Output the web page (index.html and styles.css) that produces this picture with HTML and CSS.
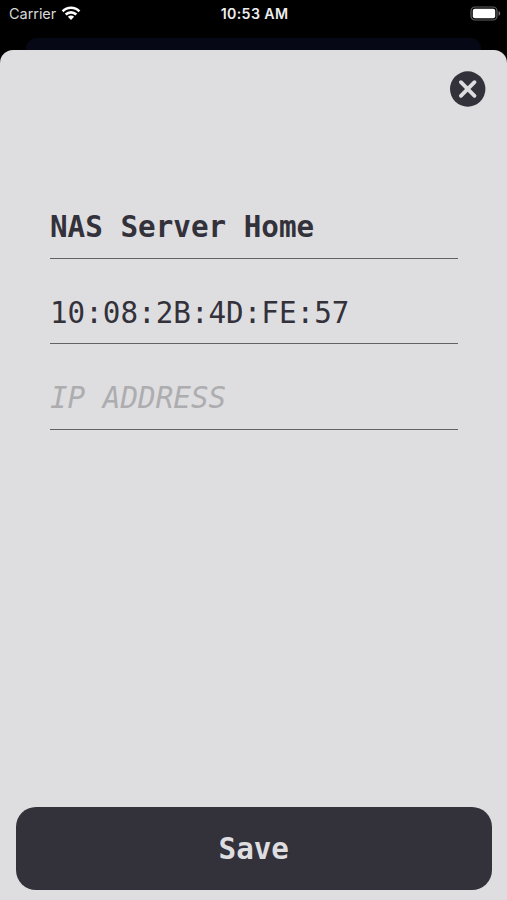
FILE: index.html
```html
<!DOCTYPE html>
<html lang="en">
<head>
<meta charset="utf-8">
<title>Edit device</title>
<meta name="viewport" content="width=device-width, initial-scale=1">
<link rel="stylesheet" href="styles.css">
</head>
<body>
<div class="screen">
  <header class="status">
    <div class="status-left">
      <span class="carrier">Carrier</span>
      <svg class="wifi" width="20" height="14" viewBox="0 0 20 14" fill="none" stroke="#fff" stroke-width="2.6">
        <path d="M1.6 5.3C6.2.5 13.8.5 18.4 5.3"/>
        <path d="M4.7 8.5c3-2.9 7.6-2.9 10.6 0"/>
        <path d="M10 14 6.9 10.8c1.8-1.6 4.4-1.6 6.2 0z" fill="#fff" stroke="none"/>
      </svg>
    </div>
    <span class="time">10:53 AM</span>
    <svg class="battery" width="31" height="15" viewBox="0 0 31 15">
      <rect x="1" y="1" width="26" height="13" rx="4" fill="none" stroke="#626262" stroke-width="1.2"/>
      <rect x="2.8" y="2.8" width="22.4" height="9.4" rx="2" fill="#fff"/>
      <path d="M28.6 5.1c2.2 1 2.2 3.8 0 4.8z" fill="#777"/>
    </svg>
  </header>
  <div class="backdrop-card"></div>
  <main class="sheet">
    <button class="close" type="button" aria-label="Close">
      <svg width="36" height="36" viewBox="0 0 36 36">
        <circle cx="17.7" cy="18" r="17.7" fill="#33313a"/>
        <path d="M10.9 11.2 24.5 24.8M24.5 11.2 10.9 24.8" stroke="#dedee1" stroke-width="3.8" stroke-linecap="round"/>
      </svg>
    </button>
    <form class="form">
      <div class="field name">NAS Server Home</div>
      <div class="field">10:08:2B:4D:FE:57</div>
      <div class="field placeholder">IP ADDRESS</div>
    </form>
    <button class="save" type="button">Save</button>
  </main>
</div>
</body>
</html>
```
FILE: styles.css
```css
* { box-sizing: border-box; }
body { margin: 0; background: #000; }
.screen {
  height: 900px;
  display: flex;
  flex-direction: column;
  overflow: hidden;
}
.status {
  height: 38px;
  flex: none;
  display: grid;
  grid-template-columns: 1fr auto 1fr;
  align-items: start;
  padding: 5px 6px 0 9px;
  color: #fff;
  font: 14.5px/18px Inter, sans-serif;
}
.status-left { display: flex; gap: 5px; }
.carrier { color: #d8d8d8; letter-spacing: -0.05px; }
.wifi { margin-top: 1px; }
.time {
  margin-right: 1px;
  font-weight: 600;
  font-size: 14.2px;
  letter-spacing: 0.36px;
  color: #eee;
}
.battery { justify-self: end; margin-top: 1px; }
.backdrop-card {
  height: 12px;
  flex: none;
  margin: 0 26px;
  border-radius: 10px 10px 0 0;
  background: #070815;
}
.sheet {
  flex: 1;
  display: flex;
  flex-direction: column;
  padding: 21px 15px 10px;
  border-radius: 13px 13px 0 0;
  background: #dedee1;
}
.close {
  align-self: flex-end;
  width: 36px;
  height: 36px;
  margin-right: 6px;
  padding: 0;
  border: 0;
  background: none;
}
.close svg { display: block; }
.form { margin: 88px 34px 0 35px; }
.field {
  height: 85.5px;
  padding-top: 36.7px;
  border-bottom: 1.5px solid #626164;
  color: #33313a;
  font: 29.25px/34px "DejaVu Sans Mono", monospace;
  white-space: pre;
}
.field:first-child { height: 64px; padding-top: 15px; }
.field:nth-child(2) { height: 85px; }
.field:nth-child(3) { height: 86px; }
.name { font-weight: 700; }
.placeholder { color: #adadaf; font-style: italic; }
.save {
  height: 83px;
  margin-top: auto;
  margin-left: 0.5px;
  border: 0;
  border-radius: 20px;
  background: #33313a;
  color: #dedee1;
  font: 700 29.25px/34px "DejaVu Sans Mono", monospace;
}
```
